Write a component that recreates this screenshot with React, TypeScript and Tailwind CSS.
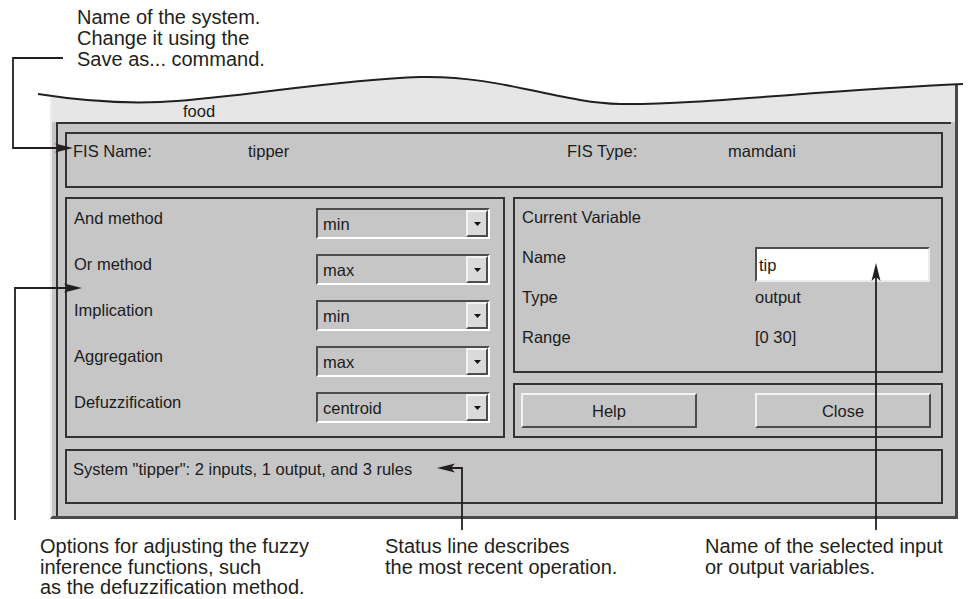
import React from 'react';

const ink = '#231f20';

function Select({ value }: { value: string }) {
  return (
    <div className="flex h-[31px] w-[174px] border-2 border-t-[#4d4d4d] border-l-[#4d4d4d] border-b-white border-r-white">
      <div className="flex flex-1 items-center pl-[5px]">{value}</div>
      <div className="flex w-[22px] items-center justify-center border-2 border-t-[#f2f2f2] border-l-[#f2f2f2] border-b-[#4d4d4d] border-r-[#4d4d4d] bg-[#dadada]">
        <svg width="7" height="4" viewBox="0 0 7 4">
          <polygon points="0,0 7,0 3.5,4" fill="#111" />
        </svg>
      </div>
    </div>
  );
}

function Button({ label }: { label: string }) {
  return (
    <div className="flex h-[35px] w-[176px] items-center justify-center border-2 border-t-[#f2f2f2] border-l-[#f2f2f2] border-b-[#4d4d4d] border-r-[#4d4d4d]">
      {label}
    </div>
  );
}

// arrow head, tip at (x, y)
function Head({ x, y, dir }: { x: number; y: number; dir: 'r' | 'l' | 'u' }) {
  const rot = dir === 'r' ? 0 : dir === 'l' ? 180 : -90;
  return (
    <polygon
      points="0,0 -18,-4.5 -14,0 -18,4.5"
      fill={ink}
      transform={`translate(${x} ${y}) rotate(${rot})`}
    />
  );
}

const methods = [
  ['And method', 'min'],
  ['Or method', 'max'],
  ['Implication', 'min'],
  ['Aggregation', 'max'],
  ['Defuzzification', 'centroid'],
];

export default function App() {
  return (
    <div className="relative h-[599px] w-[969px] overflow-hidden bg-white font-['Liberation_Sans',Arial,sans-serif]">
      <div className="pl-[77px] pt-[7px] text-[20px] leading-[21px] text-[#231f20]">
        Name of the system.
        <br />
        Change it using the
        <br />
        Save as... command.
      </div>

      {/* window */}
      <div className="ml-[50px] mt-[6px] flex h-[443px] w-[908px] flex-col border-l-2 border-l-[#ececec] border-r-[3px] border-r-[#4a4a4a] border-b-[3px] border-b-[#4a4a4a] bg-[#c6c6c6] text-[16.5px] leading-[16px] text-[#1c1c1c]">
        <div className="flex h-[46px] items-end bg-[#e6e6e6] pb-[3px] pl-[131px]">food</div>

        <div className="ml-[4px] flex w-[895px] flex-1 flex-col border-t-2 border-l-2 border-[#333] pl-[7px] pr-[8px] pt-[8px]">
          <div className="flex h-[56px] items-start border-2 border-[#333] pl-[6px] pt-[9px]">
            <span className="w-[175px]">FIS Name:</span>
            <span className="w-[319px]">tipper</span>
            <span className="w-[161px]">FIS Type:</span>
            <span>mamdani</span>
          </div>

          <div className="mt-[9px] flex gap-[8px]">
            <div className="flex h-[241px] w-[440px] flex-col gap-[15px] border-2 border-[#333] pl-[7px] pr-[13px] pt-[9px]">
              {methods.map(([label, value]) => (
                <div key={label} className="flex items-start justify-between">
                  <span className="pt-[2px]">{label}</span>
                  <Select value={value} />
                </div>
              ))}
            </div>

            <div className="flex w-[430px] flex-col gap-[10px]">
              <div className="h-[176px] border-2 border-[#333] pl-[7px] pt-[10px]">
                <div className="h-[40px]">Current Variable</div>
                <div className="flex h-[40px] items-start">
                  <span className="w-[233px]">Name</span>
                  <div className="-mt-[2px] flex h-[35px] w-[175px] items-center border-2 border-t-[#4d4d4d] border-l-[#4d4d4d] border-b-[#ececec] border-r-[#ececec] bg-white pl-[2px]">
                    tip
                  </div>
                </div>
                <div className="flex h-[40px]">
                  <span className="w-[233px]">Type</span>
                  <span>output</span>
                </div>
                <div className="flex h-[40px]">
                  <span className="w-[233px]">Range</span>
                  <span>[0 30]</span>
                </div>
              </div>

              <div className="flex h-[55px] gap-[58px] border-2 border-[#333] pl-[6px] pt-[8px]">
                <Button label="Help" />
                <Button label="Close" />
              </div>
            </div>
          </div>

          <div className="mt-[11px] h-[55px] border-2 border-[#333] pl-[6px] pt-[10px]">
            System "tipper": 2 inputs, 1 output, and 3 rules
          </div>
        </div>
      </div>

      <div className="mt-[17px] flex text-[20px] leading-[20.5px] text-[#231f20]">
        <div className="ml-[40px] w-[345px]">
          Options for adjusting the fuzzy
          <br />
          inference functions, such
          <br />
          as the defuzzification method.
        </div>
        <div className="w-[320px]">
          Status line describes
          <br />
          the most recent operation.
        </div>
        <div>
          Name of the selected input
          <br />
          or output variables.
        </div>
      </div>

      {/* torn top edge of the window and the callout lines */}
      <svg className="pointer-events-none absolute left-0 top-0" width="969" height="599">
        <path
          d="M38 94 C70 99 110 104 160 102 C230 99 330 80 420 77 C500 75 560 103 620 104 C700 105 820 90 963 84 L969 84 L969 74 L38 74 Z"
          fill="white"
        />
        <path
          d="M38 94 C70 99 110 104 160 102 C230 99 330 80 420 77 C500 75 560 103 620 104 C700 105 820 90 963 84"
          fill="none"
          stroke={ink}
          strokeWidth="2"
        />
        <g fill="none" stroke={ink} strokeWidth="1.8">
          <polyline points="63,58 13,58 13,148 60,148" />
          <polyline points="15,520 15,288 68,288" />
          <polyline points="462,530 462,468 450,468" />
          <polyline points="876,530 876,276" />
        </g>
        <Head x={73} y={148} dir="r" />
        <Head x={82} y={288} dir="r" />
        <Head x={437} y={468} dir="l" />
        <Head x={876} y={263} dir="u" />
      </svg>
    </div>
  );
}
